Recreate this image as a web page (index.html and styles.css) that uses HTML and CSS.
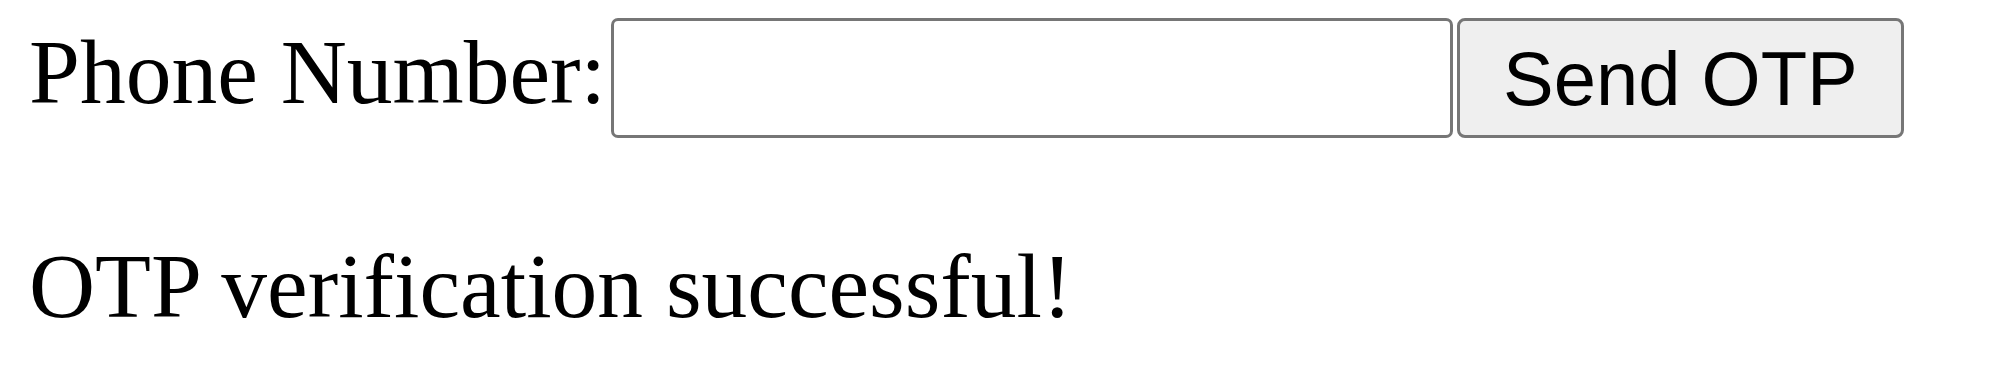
FILE: index.html
```html
<!DOCTYPE html>
<html lang="en">
<head>
    <meta charset="UTF-8">
    <meta name="viewport" content="width=device-width, initial-scale=1.0">
    <title>OTP Verification</title>
    <link rel="stylesheet" href="styles.css">
</head>
<body>
    <div class="container">
        <form id="otpForm" class="otp-row">
            <label for="phone" class="otp-label">Phone Number:</label>
            <input type="tel" id="phone" name="phone" class="otp-input">
            <button type="submit" class="otp-button">Send OTP</button>
        </form>

        <p id="statusMessage" class="status-message">OTP verification successful!</p>
    </div>
</body>
</html>
```

FILE: styles.css
```css
* {
    margin: 0;
    padding: 0;
    box-sizing: border-box;
}

body {
    background: #ffffff;
    color: #000000;
    font-family: "Liberation Serif", "Times New Roman", serif;
}

.container {
    padding: 18px 29px 0;
}

.otp-row {
    display: flex;
    align-items: flex-start;
}

.otp-label {
    font-size: 91.5px;
    line-height: 104px;
    margin-top: 2px;
}

.otp-input {
    width: 842px;
    height: 120px;
    margin-left: 5px;
    border: 3.5px solid #767676;
    border-radius: 7px;
    background: #ffffff;
    font-size: 60px;
    font-family: "Liberation Sans", Arial, sans-serif;
    outline: none;
}

.otp-button {
    width: 447px;
    height: 120px;
    margin-left: 4px;
    border: 3.5px solid #767676;
    border-radius: 8px;
    background: #efefef;
    color: #000000;
    font-family: "Liberation Sans", Arial, sans-serif;
    font-size: 76px;
    cursor: pointer;
}

.status-message {
    font-size: 91.5px;
    line-height: 104px;
    margin-top: 96px;
}
```
